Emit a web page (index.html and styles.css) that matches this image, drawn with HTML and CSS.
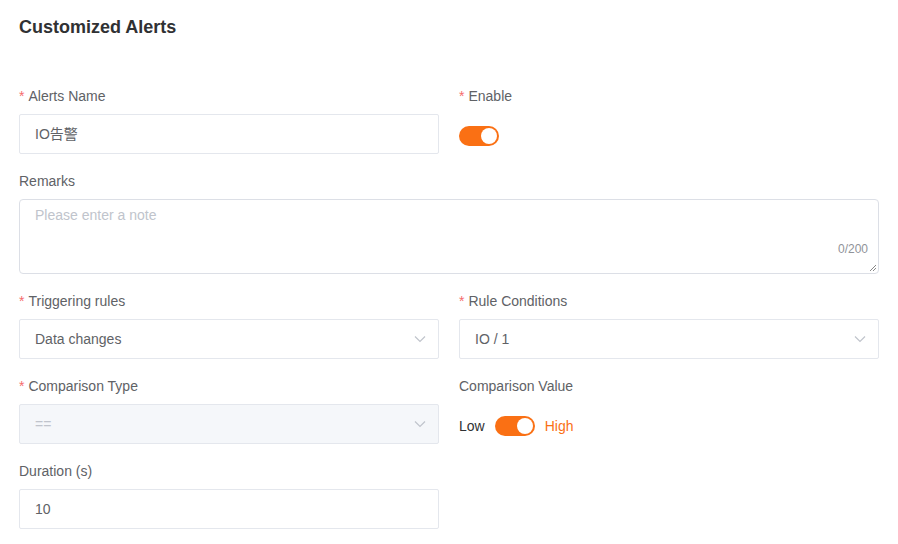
FILE: index.html
```html
<!DOCTYPE html>
<html>
  <head>
    <meta charset="UTF-8" />
    <title>Customized Alerts</title>
    <link rel="stylesheet" href="styles.css">
  </head>
  <body>
    <div class="page">
      <h2 class="title">Customized Alerts</h2>

      <div class="form">
        <div class="row">
          <div class="item">
            <div class="label"><span class="req">*</span>Alerts Name</div>
            <div class="input">IO告警</div>
          </div>
          <div class="item">
            <div class="label"><span class="req">*</span>Enable</div>
            <div class="switch_line">
              <span class="switch on"><span class="knob"></span></span>
            </div>
          </div>
        </div>

        <div class="item">
          <div class="label">Remarks</div>
          <div class="textarea">
            <span class="placeholder">Please enter a note</span>
            <span class="count">0/200</span>
            <svg class="grip" width="8" height="8" viewBox="0 0 8 8">
              <path d="M7 1L1 7M7 4L4 7" stroke="#888" stroke-width="1" />
            </svg>
          </div>
        </div>

        <div class="row">
          <div class="item">
            <div class="label"><span class="req">*</span>Triggering rules</div>
            <div class="input select">
              <span>Data changes</span>
              <svg class="arrow" width="12" height="8" viewBox="0 0 12 8">
                <path d="M1 1.5L6 6.5L11 1.5" fill="none" stroke="#c0c4cc" stroke-width="1.2" />
              </svg>
            </div>
          </div>
          <div class="item">
            <div class="label"><span class="req">*</span>Rule Conditions</div>
            <div class="input select">
              <span>IO / 1</span>
              <svg class="arrow" width="12" height="8" viewBox="0 0 12 8">
                <path d="M1 1.5L6 6.5L11 1.5" fill="none" stroke="#c0c4cc" stroke-width="1.2" />
              </svg>
            </div>
          </div>
        </div>

        <div class="row">
          <div class="item">
            <div class="label"><span class="req">*</span>Comparison Type</div>
            <div class="input select disabled">
              <span>==</span>
              <svg class="arrow" width="12" height="8" viewBox="0 0 12 8">
                <path d="M1 1.5L6 6.5L11 1.5" fill="none" stroke="#c0c4cc" stroke-width="1.2" />
              </svg>
            </div>
          </div>
          <div class="item">
            <div class="label">Comparison Value</div>
            <div class="switch_line">
              <span class="sw_text">Low</span>
              <span class="switch on"><span class="knob"></span></span>
              <span class="sw_text active">High</span>
            </div>
          </div>
        </div>

        <div class="row">
          <div class="item">
            <div class="label">Duration (s)</div>
            <div class="input">10</div>
          </div>
          <div class="item"></div>
        </div>
      </div>
    </div>
  </body>
</html>
```

FILE: styles.css
```css
body {
  margin: 0;
  background: #fff;
  font-family: "Liberation Sans", Arial, "Noto Sans CJK SC", sans-serif;
  color: #606266;
}
.page {
  padding: 17px 19px 0 19px;
  width: 860px;
}
.title {
  margin: 0;
  font-size: 18px;
  line-height: 21px;
  font-weight: bold;
  color: #303133;
}
.form {
  margin-top: 48px;
}
.row {
  display: grid;
  grid-template-columns: 420px 420px;
  column-gap: 20px;
}
.item {
  margin-bottom: 17px;
}
.label {
  font-size: 14px;
  line-height: 20px;
  color: #606266;
  margin-bottom: 8px;
}
.req {
  color: #f56c6c;
  margin-right: 4px;
}

/* Inputs */
.input {
  box-sizing: border-box;
  height: 40px;
  border: 1px solid #e4e7ed;
  border-radius: 2px;
  padding: 0 15px;
  font-size: 14px;
  line-height: 38px;
  color: #606266;
}
.select {
  display: flex;
  justify-content: space-between;
  align-items: center;
}
.select .arrow {
  margin-right: -3px;
}
.disabled {
  background: #f5f7fa;
  color: #c0c4cc;
}
.textarea {
  position: relative;
  box-sizing: border-box;
  height: 75px;
  border: 1px solid #dcdfe6;
  border-radius: 4px;
  padding: 5px 15px;
  font-size: 14px;
  line-height: 20px;
}
.placeholder {
  color: #c0c4cc;
}
.count {
  position: absolute;
  right: 10px;
  bottom: 17px;
  font-size: 12px;
  line-height: 14px;
  color: #909399;
}
.grip {
  position: absolute;
  right: 1px;
  bottom: 1px;
}

/* Switch */
.switch_line {
  box-sizing: border-box;
  display: flex;
  align-items: center;
  height: 40px;
  padding-top: 4px;
}
.switch {
  position: relative;
  display: inline-block;
  width: 40px;
  height: 20px;
  border-radius: 10px;
  background: #dcdfe6;
}
.switch.on {
  background: #fa7014;
}
.knob {
  position: absolute;
  top: 2px;
  left: 2px;
  width: 16px;
  height: 16px;
  border-radius: 50%;
  background: #fff;
}
.switch.on .knob {
  left: 22px;
}
.sw_text {
  font-size: 14px;
  color: #303133;
  margin-right: 10px;
}
.sw_text.active {
  color: #fa7014;
  margin-left: 10px;
  margin-right: 0;
}
```
